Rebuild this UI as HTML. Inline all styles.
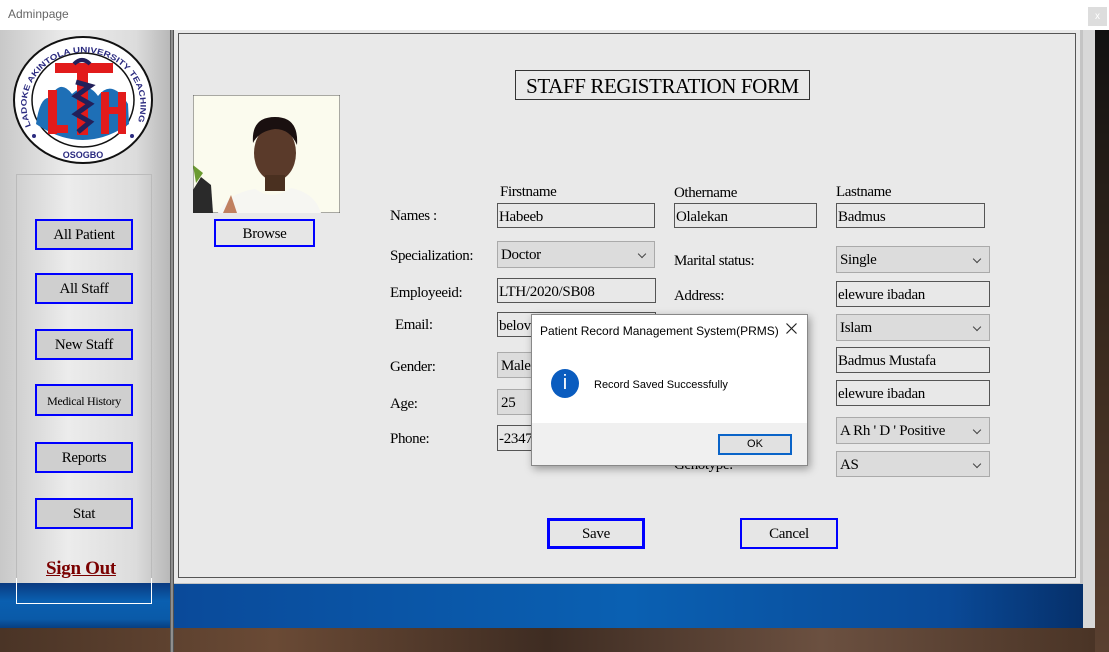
<!DOCTYPE html>
<html><head><style>
*{margin:0;padding:0;box-sizing:border-box}
body{width:1109px;height:652px;overflow:hidden;position:relative;background:#3a2a20;font-family:"Liberation Serif",serif;font-size:15px;color:#000}
.a{position:absolute}
.tb{background:#e8e8e8;border:1px solid #555;font-size:15px;padding:3px 1px 1px;line-height:20px;overflow:hidden;white-space:nowrap;letter-spacing:-0.3px}
.cb{background:#dcdcdc;border:1px solid #aaa;font-size:15px;padding:4px 3px 2px;line-height:19px;overflow:hidden;white-space:nowrap;letter-spacing:-0.3px}
.cb:after{content:"";position:absolute;right:9px;top:9px;width:5px;height:5px;border-right:1px solid #444;border-bottom:1px solid #444;transform:rotate(45deg)}
.btn{border:2px solid #0000ff;text-align:center;font-size:15px;background:#e6e6e6;letter-spacing:-0.3px}
.sb{background:#cfcfcf}
.lbl{font-size:15px;letter-spacing:-0.4px;margin-top:2px}
</style></head><body>
<div class="a" style="left:0;top:0;width:1109px;height:30px;background:#fff"></div>
<div class="a" style="left:8px;top:7px;font-family:'Liberation Sans';font-size:12px;color:#666">Adminpage</div>
<div class="a" style="left:1088px;top:7px;width:19px;height:19px;background:#ddd;color:#fff;font-family:'Liberation Sans';font-size:10px;text-align:center;line-height:19px">x</div>
<div class="a" style="left:1083px;top:30px;width:12px;height:622px;background:#d8d8d8"></div>
<div class="a" style="left:1095px;top:30px;width:14px;height:622px;background:linear-gradient(#111,#3a2a1e,#5a4030)"></div>
<div class="a" style="left:0;top:628px;width:1095px;height:24px;background:linear-gradient(90deg,#4a3426,#6a4a35,#3e2c22,#6b5040,#4a3426)"></div>
<div class="a" style="left:0;top:30px;width:170px;height:598px;background:linear-gradient(90deg,#c8c8c8,#ececec 40%,#dcdcdc 80%,#b8b8b8)"></div>
<div class="a" style="left:170px;top:30px;width:4px;height:622px;background:linear-gradient(90deg,#444,#aaa,#333)"></div>
<div class="a" style="left:174px;top:30px;width:909px;height:598px;background:#c4c4c4"></div>
<div class="a" style="left:174px;top:30px;width:906px;height:553px;background:#e9e9e9"></div>
<div class="a" style="left:178px;top:33px;width:898px;height:545px;border:1px solid #555"></div>
<!-- logo -->
<svg class="a" style="left:12px;top:34px" width="142" height="132" viewBox="0 0 142 132">
<ellipse cx="71" cy="66" rx="69" ry="63" fill="#fff" stroke="#111" stroke-width="2"/>
<ellipse cx="71" cy="66" rx="51" ry="47" fill="#fff" stroke="#111" stroke-width="1.5"/>
<path d="M24 90 Q28 62 38 64 Q48 44 60 60 Q75 46 86 62 Q100 44 116 70 L117 90 Q71 122 24 90Z" fill="#1e6fb6"/>
<rect x="43" y="29" width="58" height="10" fill="#e21b1b"/>
<rect x="65" y="29" width="11" height="72" fill="#e21b1b"/>
<rect x="36" y="56" width="9" height="44" fill="#e21b1b"/><rect x="36" y="91" width="20" height="8" fill="#e21b1b"/>
<rect x="89" y="58" width="8" height="42" fill="#e21b1b"/><rect x="106" y="58" width="8" height="42" fill="#e21b1b"/><rect x="89" y="73" width="25" height="7" fill="#e21b1b"/>
<path d="M64 48 L78 52 L64 62 L78 70 L64 80 L78 88 L66 98" stroke="#22205a" stroke-width="5" fill="none"/>
<path d="M62 30 Q70 22 78 30" stroke="#22205a" stroke-width="4" fill="none"/>
<text x="71" y="124" font-family="Liberation Sans" font-size="9" font-weight="bold" fill="#2b2b80" text-anchor="middle">OSOGBO</text>
<path id="arc" d="M19 92 A57 53 0 1 1 124 92" fill="none"/>
<text font-family="Liberation Sans" font-size="8" font-weight="bold" fill="#2b2b80"><textPath href="#arc" textLength="262" lengthAdjust="spacingAndGlyphs">LADOKE AKINTOLA UNIVERSITY TEACHING HOSPITAL</textPath></text>
<circle cx="22" cy="102" r="2" fill="#2b2b80"/><circle cx="120" cy="102" r="2" fill="#2b2b80"/>
</svg>
<div class="a" style="left:16px;top:174px;width:136px;height:430px;border:1px solid #bbb"></div>
<div class="a" style="left:16px;top:578px;width:136px;height:26px;border:1px solid #fff;border-top:none"></div>
<div class="a btn sb" style="left:35px;top:219px;width:98px;height:31px;line-height:29px">All Patient</div>
<div class="a btn sb" style="left:35px;top:273px;width:98px;height:31px;line-height:29px">All Staff</div>
<div class="a btn sb" style="left:35px;top:329px;width:98px;height:31px;line-height:29px">New Staff</div>
<div class="a btn sb" style="left:35px;top:384px;width:98px;height:32px;line-height:30px;font-size:12px">Medical History</div>
<div class="a btn sb" style="left:35px;top:442px;width:98px;height:31px;line-height:29px">Reports</div>
<div class="a btn sb" style="left:35px;top:498px;width:98px;height:31px;line-height:29px">Stat</div>
<div class="a" style="left:46px;top:558px;font-size:19px;font-weight:bold;color:#7a0000;text-decoration:underline;letter-spacing:-0.3px">Sign Out</div>
<div class="a" style="left:0;top:583px;width:170px;height:45px;background:linear-gradient(#0a3a80,#0a5fb0 40%,#0a5aa8 80%,#083e80)"></div>
<div class="a" style="left:16px;top:583px;width:136px;height:21px;border:1px solid #fff;border-top:none"></div>
<div class="a" style="left:174px;top:584px;width:909px;height:44px;background:linear-gradient(90deg,#0a4a9a,#0a60b2 50%,#0a4a98 85%,#06306a)"></div>
<div class="a" style="left:515px;top:70px;width:295px;height:30px;border:1px solid #333;text-align:center;font-size:21px;line-height:30px;letter-spacing:-0.4px">STAFF REGISTRATION FORM</div>
<!-- photo -->
<svg class="a" style="left:193px;top:95px" width="147" height="118"><rect width="147" height="118" fill="#fbfbee" stroke="#555"/>
<path d="M25 118 Q35 98 62 94 Q80 106 98 93 Q122 98 128 118Z" fill="#f6f6f2"/>
<ellipse cx="82" cy="58" rx="21" ry="28" fill="#5a3a2a"/><path d="M60 48 Q58 22 82 22 Q106 22 104 50 Q97 34 82 34 Q66 36 60 48Z" fill="#1a1010"/>
<rect x="72" y="80" width="20" height="16" fill="#4a3020"/>
<path d="M0 95 L8 82 L18 90 L20 118 L0 118Z" fill="#2a2a2a"/><path d="M0 70 L10 78 L3 88Z" fill="#6a9a30"/>
<path d="M30 118 L38 100 L44 118Z" fill="#c08060"/>
</svg>
<div class="a btn" style="left:214px;top:219px;width:101px;height:28px;line-height:27px">Browse</div>
<div class="a lbl" style="left:500px;top:182px">Firstname</div>
<div class="a lbl" style="left:674px;top:183px">Othername</div>
<div class="a lbl" style="left:836px;top:182px">Lastname</div>
<div class="a lbl" style="left:390px;top:206px">Names :</div>
<div class="a lbl" style="left:390px;top:246px">Specialization:</div>
<div class="a lbl" style="left:390px;top:283px">Employeeid:</div>
<div class="a lbl" style="left:395px;top:315px">Email:</div>
<div class="a lbl" style="left:390px;top:357px">Gender:</div>
<div class="a lbl" style="left:390px;top:394px">Age:</div>
<div class="a lbl" style="left:390px;top:429px">Phone:</div>
<div class="a lbl" style="left:674px;top:251px">Marital status:</div>
<div class="a lbl" style="left:674px;top:286px">Address:</div>
<div class="a lbl" style="left:674px;top:455px">Genotype:</div>
<div class="a tb" style="left:497px;top:203px;width:158px;height:25px">Habeeb</div>
<div class="a tb" style="left:674px;top:203px;width:143px;height:25px">Olalekan</div>
<div class="a tb" style="left:836px;top:203px;width:149px;height:25px">Badmus</div>
<div class="a cb" style="left:497px;top:241px;width:158px;height:27px">Doctor</div>
<div class="a tb" style="left:497px;top:278px;width:159px;height:25px">LTH/2020/SB08</div>
<div class="a tb" style="left:497px;top:312px;width:159px;height:25px">belovedbadmus</div>
<div class="a cb" style="left:497px;top:352px;width:158px;height:26px">Male</div>
<div class="a cb" style="left:497px;top:389px;width:158px;height:26px">25</div>
<div class="a tb" style="left:497px;top:425px;width:158px;height:26px">-2347</div>
<div class="a cb" style="left:836px;top:246px;width:154px;height:27px">Single</div>
<div class="a tb" style="left:836px;top:281px;width:154px;height:26px">elewure ibadan</div>
<div class="a cb" style="left:836px;top:314px;width:154px;height:27px">Islam</div>
<div class="a tb" style="left:836px;top:347px;width:154px;height:26px">Badmus Mustafa</div>
<div class="a tb" style="left:836px;top:380px;width:154px;height:26px">elewure ibadan</div>
<div class="a cb" style="left:836px;top:417px;width:154px;height:27px">A Rh ' D ' Positive</div>
<div class="a cb" style="left:836px;top:451px;width:154px;height:26px">AS</div>
<div class="a btn" style="left:547px;top:518px;width:98px;height:31px;line-height:27px;border-width:3px">Save</div>
<div class="a btn" style="left:740px;top:518px;width:98px;height:31px;line-height:29px">Cancel</div>
<div class="a" style="left:531px;top:314px;width:277px;height:152px;background:#fff;border:1px solid #888;box-shadow:2px 3px 8px rgba(0,0,0,.35);font-family:'Liberation Sans';font-size:12px">
<div class="a" style="left:8px;top:9px">Patient Record Management System(PRMS)</div>
<svg class="a" style="left:254px;top:8px" width="11" height="11"><path d="M0.5 0.5L10.5 10.5M10.5 0.5L0.5 10.5" stroke="#222" stroke-width="1.2"/></svg>
<div class="a" style="left:19px;top:54px;width:28px;height:29px;border-radius:50%;background:#0a5cbf;color:#fff;text-align:center;font-size:20px;line-height:29px">i</div>
<div class="a" style="left:62px;top:64px;font-size:11px">Record Saved Successfully</div>
<div class="a" style="left:0;top:108px;width:275px;height:42px;background:#f0f0f0"></div>
<div class="a" style="left:186px;top:119px;width:74px;height:21px;border:2px solid #0a64c8;background:#e1e1e1;text-align:center;line-height:17px;font-size:11px">OK</div>
</div>
</body></html>
